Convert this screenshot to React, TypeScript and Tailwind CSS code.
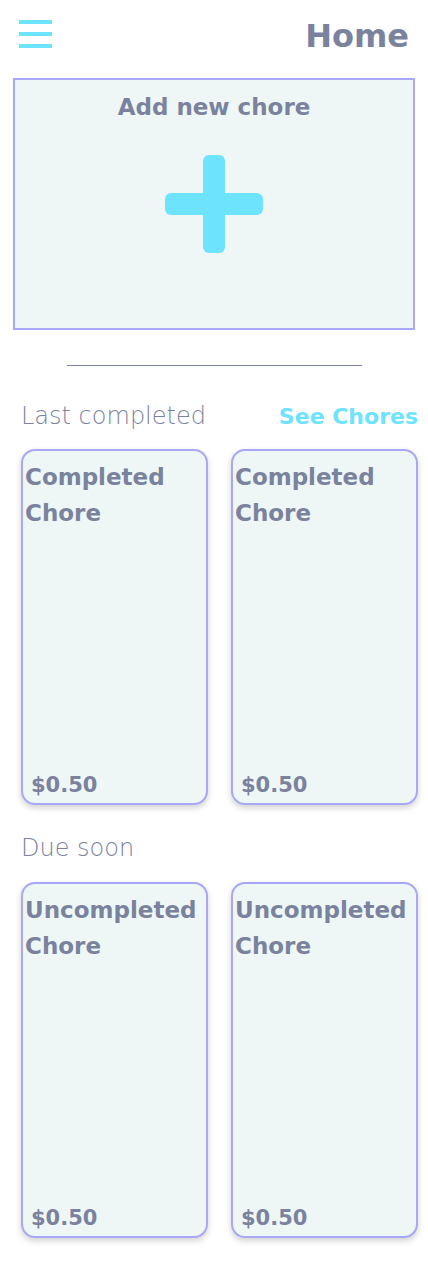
const font = { fontFamily: '"DejaVu Sans", "Liberation Sans", sans-serif' };

function ChoreCard({ title, price }: { title: string; price: string }) {
  return (
    <div className="flex h-[356px] flex-col justify-between rounded-[14px] border-2 border-[#a9a8f6] bg-[#eef7f6] shadow-[0_3px_6px_rgba(0,0,0,0.18)]">
      <p className="pl-[2px] pt-[8px] text-[23px] font-bold leading-[36px] text-[#7a829e]">
        {title}
      </p>
      <p className="pb-[4px] pl-[8px] text-[21px] font-bold leading-[28px] text-[#7a829e]">
        {price}
      </p>
    </div>
  );
}

export default function App() {
  return (
    <div className="min-h-[1266px] w-[428px] bg-white" style={font}>
      <div className="flex items-start justify-between pl-[19px] pr-[19px] pt-[16px]">
        <div className="mt-[4px] flex w-[33px] flex-col gap-[8px]">
          <span className="h-[4px] w-full bg-[#6ee3fe]"></span>
          <span className="h-[4px] w-full bg-[#6ee3fe]"></span>
          <span className="h-[4px] w-full bg-[#6ee3fe]"></span>
        </div>
        <h1 className="text-[32px] font-bold leading-[40px] text-[#7a829e]">Home</h1>
      </div>

      <div className="mx-[13px] mt-[22px] flex h-[252px] flex-col items-center border-2 border-[#a9a8f6] bg-[#eef7f6]">
        <p className="pt-[12px] text-[23px] font-bold leading-[30px] text-[#7a829e]">Add new chore</p>
        <svg width="98" height="98" viewBox="0 0 98 98" className="mt-[33px]">
          <rect x="38" y="0" width="22" height="98" rx="6" fill="#6ee3fe" />
          <rect x="0" y="38" width="98" height="22" rx="6" fill="#6ee3fe" />
        </svg>
      </div>

      <div className="mx-auto mt-[35px] h-px w-[295px] bg-[#7a829e]"></div>

      <div className="mt-[35px] flex items-baseline justify-between pl-[21px] pr-[10px] leading-[30px]">
        <span className="text-[24px] font-light text-[#7a829e]">Last completed</span>
        <span className="text-[22px] font-bold text-[#6ee3fe]">See Chores</span>
      </div>

      <div className="mt-[17px] grid grid-cols-2 gap-[23px] pl-[21px] pr-[10px]">
        <ChoreCard title="Completed Chore" price="$0.50" />
        <ChoreCard title="Completed Chore" price="$0.50" />
      </div>

      <p className="mt-[28px] pl-[21px] text-[24px] font-light leading-[30px] text-[#7a829e]">Due soon</p>

      <div className="mt-[19px] grid grid-cols-2 gap-[23px] pl-[21px] pr-[10px]">
        <ChoreCard title="Uncompleted Chore" price="$0.50" />
        <ChoreCard title="Uncompleted Chore" price="$0.50" />
      </div>
    </div>
  );
}
